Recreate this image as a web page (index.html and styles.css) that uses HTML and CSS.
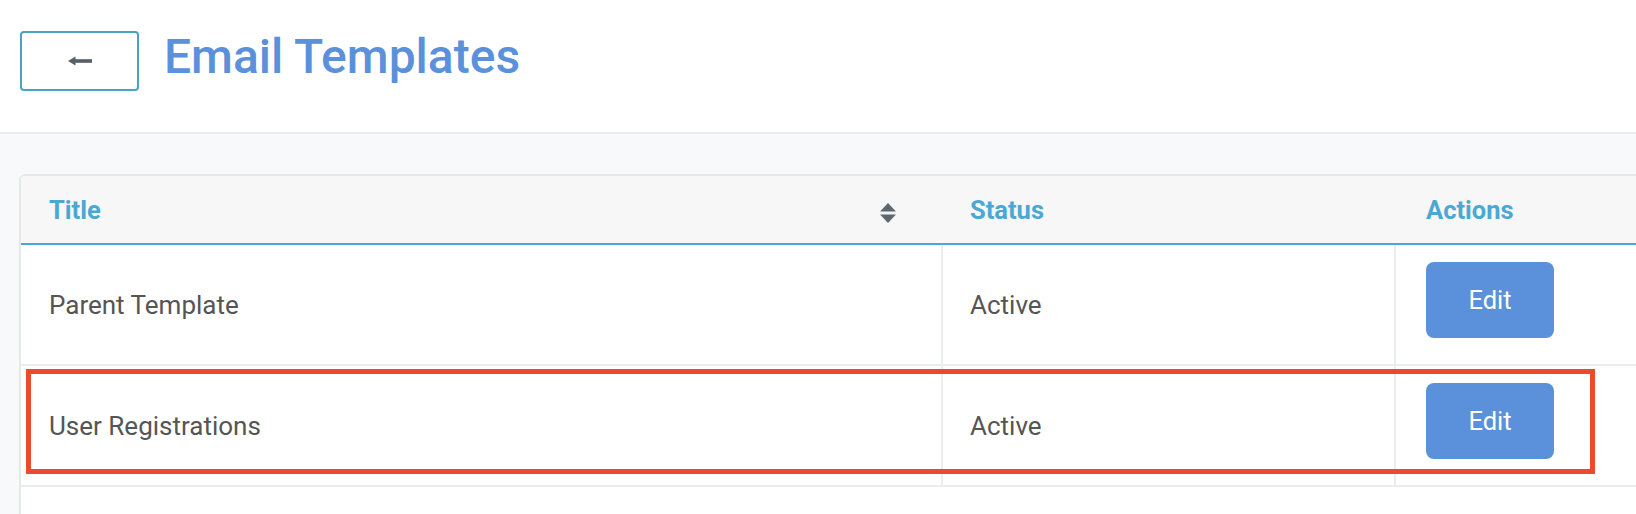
FILE: index.html
```html
<!DOCTYPE html>
<html lang="en">
<head>
<meta charset="utf-8">
<title>Email Templates</title>
<link rel="stylesheet" href="styles.css">
</head>
<body>
<header class="topbar">
  <button class="back-btn" type="button" aria-label="Back">
    <svg width="24" height="10" viewBox="0 0 24 10"><path d="M0 5 L7.5 0.5 L7.5 9.5 Z" fill="#555f66"/><rect x="6" y="3.2" width="18" height="3.6" fill="#555f66"/></svg>
  </button>
  <h1 class="page-title">Email Templates</h1>
</header>
<main class="content">
  <div class="card">
    <div class="row head">
      <div class="cell c-title">
        <span>Title</span>
        <svg class="sort" width="16" height="20" viewBox="0 0 16 20"><path d="M0 8.5 L8 0 L16 8.5 Z" fill="#5d6770"/><path d="M0 11.5 L8 20 L16 11.5 Z" fill="#5d6770"/></svg>
      </div>
      <div class="cell c-status">Status</div>
      <div class="cell c-actions">Actions</div>
    </div>
    <div class="row body">
      <div class="cell c-title">Parent Template</div>
      <div class="cell c-status">Active</div>
      <div class="cell c-actions"><button class="edit-btn" type="button">Edit</button></div>
    </div>
    <div class="row body highlighted">
      <div class="cell c-title">User Registrations</div>
      <div class="cell c-status">Active</div>
      <div class="cell c-actions"><button class="edit-btn" type="button">Edit</button></div>
      <div class="highlight-box"></div>
    </div>
  </div>
</main>
</body>
</html>
```

FILE: styles.css
```css
* { box-sizing: border-box; }
html, body {
  margin: 0;
  padding: 0;
  overflow: hidden;
  height: 514px;
}
body {
  background: #f8f9fa;
  font-family: Roboto, "Liberation Sans", sans-serif;
  color: #555555;
}
.topbar {
  display: flex;
  align-items: center;
  height: 134px;
  padding: 0 0 10px 20px;
  background: #ffffff;
  border-bottom: 2px solid #e9ebed;
  gap: 25px;
}
.back-btn {
  width: 119px;
  height: 60px;
  border: 2px solid #4aa3bf;
  border-radius: 4px;
  background: #ffffff;
  display: flex;
  align-items: center;
  justify-content: center;
  padding: 0;
}
.page-title {
  margin: 0 0 9px 0;
  font-size: 48px;
  line-height: 1;
  font-weight: 500;
  color: #5b91da;
}
.content {
  padding: 40px 0 0 19px;
}
.card {
  width: 1720px;
  background: #ffffff;
  border: 2px solid #e6e9ea;
  border-radius: 6px;
  padding-bottom: 60px;
}
.row {
  display: grid;
  grid-template-columns: 920px 453px 1fr;
}
.row.head {
  height: 69px;
  background: #f7f7f7;
  border-bottom: 2px solid #4ba8d3;
  border-radius: 5px 5px 0 0;
  font-weight: 700;
  font-size: 25.5px;
  color: #4ba8d3;
}
.row.head .cell {
  display: flex;
  align-items: center;
}
.row.head .c-title {
  justify-content: space-between;
  padding: 0 45px 0 28px;
}
.row.head .c-title .sort { margin-top: 6px; }
.row.head .c-status { padding-left: 29px; }
.row.head .c-actions { padding-left: 32px; }
.row.body {
  height: 121px;
  border-bottom: 2px solid #e9eded;
  font-size: 26px;
  color: #555555;
  position: relative;
}
.row.body .cell {
  display: flex;
  align-items: center;
}
.row.body .c-title { padding-left: 28px; }
.row.body .c-status {
  padding-left: 27px;
  border-left: 2px solid #e9eded;
}
.row.body .c-actions {
  padding-left: 30px;
  align-items: flex-start;
  padding-top: 17px;
  border-left: 2px solid #e9eded;
}
.edit-btn {
  width: 128px;
  height: 76px;
  border: none;
  border-radius: 8px;
  background: #5a91da;
  color: #ffffff;
  font-family: Roboto, "Liberation Sans", sans-serif;
  font-size: 25.5px;
  padding: 0;
}
.highlight-box {
  position: absolute;
  left: 5px;
  top: 3px;
  width: 1569px;
  height: 105px;
  border: 5px solid #eb4a2d;
  pointer-events: none;
}
```
